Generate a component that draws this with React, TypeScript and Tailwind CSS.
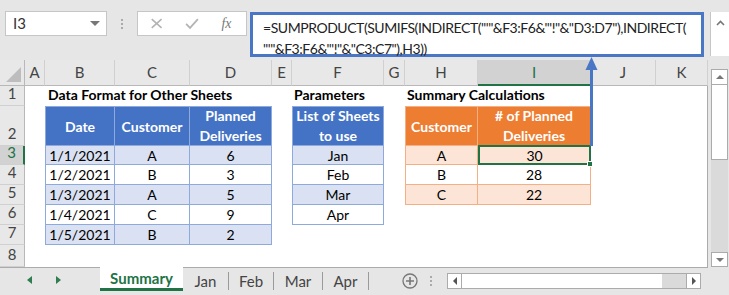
import React from "react";

const BLUE = "bg-[#4472c4]";

function Cell({ cls = "", children }: { cls?: string; children?: React.ReactNode }) {
  return <div className={"flex items-center justify-center whitespace-nowrap " + cls}>{children}</div>;
}

function ColHead({ label, sel = false }: { label: string; sel?: boolean }) {
  return (
    <div
      className={
        "flex items-center justify-center text-[15px] border-r border-[#d0d0d0] " +
        (sel
          ? "bg-[#d2d2d2] text-[#217346] border-b-2 border-b-[#217346]"
          : "bg-[#e8e8e8] text-[#444] border-b border-b-[#b8b8b8]")
      }
    >
      {label}
    </div>
  );
}

function RowHead({ n, sel = false }: { n: number; sel?: boolean }) {
  return (
    <div
      className={
        "flex items-end justify-center pb-[1px] text-[15px] border-b border-[#d0d0d0] " +
        (sel
          ? "bg-[#d2d2d2] text-[#217346] border-r-2 border-r-[#217346]"
          : "bg-[#e8e8e8] text-[#444] border-r border-r-[#b8b8b8]")
      }
    >
      {n}
    </div>
  );
}

export default function App() {
  const data = [
    ["1/1/2021", "A", "6"],
    ["1/2/2021", "B", "3"],
    ["1/3/2021", "A", "5"],
    ["1/4/2021", "C", "9"],
    ["1/5/2021", "B", "2"],
  ];
  const params = ["Jan", "Feb", "Mar", "Apr"];
  const summ = [
    ["A", "30"],
    ["B", "28"],
    ["C", "22"],
  ];

  return (
    <div className="relative w-[729px] h-[295px] overflow-hidden bg-[#e6e6e6] font-['Lato',sans-serif] text-black">
      {/* Formula bar */}
      <div className="flex h-[60px] items-start pt-[11px] pl-[5px] bg-[#e6e6e6]">
        <div className="flex h-[25px] w-[102px] items-center justify-between border border-[#c6c6c6] bg-white pl-[7px] pr-[6px]">
          <span className="text-[15px] text-[#333]">I3</span>
          <span className="h-0 w-0 border-x-[5px] border-t-[5px] border-x-transparent border-t-[#777]" />
        </div>
        <div className="flex h-[25px] w-[30px] flex-col items-center justify-center gap-[2px]">
          <span className="h-[2px] w-[2px] bg-[#aaa]" />
          <span className="h-[2px] w-[2px] bg-[#aaa]" />
          <span className="h-[2px] w-[2px] bg-[#aaa]" />
        </div>
        <div className="flex h-[25px] w-[110px] items-center border border-[#c6c6c6] bg-white">
          <svg width="110" height="23" viewBox="0 0 110 23">
            <path d="M14 7 L24 16 M24 7 L14 16" stroke="#b4b4b4" strokeWidth="1.6" fill="none" />
            <path d="M49 12 L53 16 L61 7" stroke="#b4b4b4" strokeWidth="1.8" fill="none" />
            <text x="85" y="16" fontSize="14" fontStyle="italic" fontFamily="'Liberation Serif',serif" fill="#777">
              fx
            </text>
          </svg>
        </div>
        <div className="ml-[3px] mt-[1px] h-[45px] w-[454px] border-[3px] border-[#4a76c6] bg-white pl-[10px] pt-[2px] text-[14px] leading-[21px] tracking-[-0.45px] text-[#222]">
          <div className="whitespace-nowrap">=SUMPRODUCT(SUMIFS(INDIRECT("'"&amp;F3:F6&amp;"'!"&amp;"D3:D7"),INDIRECT(</div>
          <div className="whitespace-nowrap">"'"&amp;F3:F6&amp;"'!"&amp;"C3:C7"),H3))</div>
        </div>
        <div className="ml-[6px] mt-[1px] flex h-[44px] w-[19px] justify-center border-l border-[#c6c6c6] bg-white pt-[8px]">
          <svg width="9" height="6" viewBox="0 0 9 6">
            <path d="M1 5 L4.5 1.5 L8 5" stroke="#777" strokeWidth="1.6" fill="none" />
          </svg>
        </div>
      </div>

      {/* Sheet area */}
      <div className="flex h-[207px]">
        <div className="grid w-[708px] grid-cols-[25px_20px_70px_75px_82px_20px_92px_21px_73px_113px_65px_52px] grid-rows-[26px_20px_40px_19px_20px_20px_20px_20px_22px] border-r border-[#ababab] bg-white text-[14px]">
          {/* header row */}
          <div className="relative border-b border-r border-[#b8b8b8] bg-[#e8e8e8]">
            <span className="absolute bottom-[3px] right-[3px] h-0 w-0 border-b-[15px] border-l-[15px] border-b-[#bdbdbd] border-l-transparent" />
          </div>
          {["A", "B", "C", "D", "E", "F", "G", "H"].map((c) => (
            <ColHead key={c} label={c} />
          ))}
          <ColHead label="I" sel />
          <ColHead label="J" />
          <ColHead label="K" />

          {/* row 1 */}
          <RowHead n={1} />
          <div />
          <div className="flex items-end pb-[1px] pl-[3px] font-bold whitespace-nowrap overflow-visible">Data Format for Other Sheets</div>
          <div />
          <div />
          <div />
          <div className="flex items-end pb-[1px] pl-[2px] font-bold whitespace-nowrap">Parameters</div>
          <div />
          <div className="flex items-end pb-[1px] pl-[2px] font-bold whitespace-nowrap">Summary Calculations</div>
          <div />
          <div />
          <div />

          {/* row 2 */}
          <RowHead n={2} />
          <div />
          <Cell cls={BLUE + " border border-[#8ea9db] text-white font-bold"}>Date</Cell>
          <Cell cls={BLUE + " border-y border-r border-[#8ea9db] text-white font-bold"}>Customer</Cell>
          <Cell cls={BLUE + " flex-col leading-[20px] border-y border-r border-[#8ea9db] text-white font-bold"}>
            <span>Planned</span>
            <span>Deliveries</span>
          </Cell>
          <div />
          <Cell cls={BLUE + " flex-col leading-[20px] border border-[#8ea9db] text-white font-bold"}>
            <span>List of Sheets</span>
            <span>to use</span>
          </Cell>
          <div />
          <Cell cls="bg-[#ed7d31] border border-[#f4b084] text-white font-bold">Customer</Cell>
          <Cell cls="bg-[#ed7d31] flex-col leading-[20px] border-y border-r border-[#f4b084] text-white font-bold">
            <span># of Planned</span>
            <span>Deliveries</span>
          </Cell>
          <div />
          <div />

          {/* rows 3-7 */}
          {data.map((r, i) => {
            const band = i % 2 === 0;
            const rowBg = band ? "bg-[#d9e1f2]" : "bg-white";
            const p = params[i];
            const s = summ[i];
            const orBg = i % 2 === 0 ? "bg-[#fce4d6]" : "bg-white";
            return (
              <React.Fragment key={i}>
                <RowHead n={i + 3} sel={i === 0} />
                <div />
                <Cell cls={rowBg + " border-x border-b border-[#8ea9db]"}>{r[0]}</Cell>
                <Cell cls={rowBg + " border-r border-b border-[#8ea9db]"}>{r[1]}</Cell>
                <Cell cls={rowBg + " border-r border-b border-[#8ea9db]"}>{r[2]}</Cell>
                <div />
                {p ? <Cell cls={rowBg + " border-x border-b border-[#8ea9db]"}>{p}</Cell> : <div />}
                <div />
                {s ? <Cell cls={orBg + " border-x border-b border-[#f4b084]"}>{s[0]}</Cell> : <div />}
                {s ? (
                  i === 0 ? (
                    <div className="relative -mt-[1px] flex items-center justify-center border-2 border-[#217346] bg-[#fce4d6]">
                      {s[1]}
                      <span className="absolute -bottom-[4px] -right-[4px] h-[6px] w-[6px] border border-white bg-[#217346]" />
                    </div>
                  ) : (
                    <Cell cls={orBg + " border-r border-b border-[#f4b084]"}>{s[1]}</Cell>
                  )
                ) : (
                  <div />
                )}
                <div />
                <div />
              </React.Fragment>
            );
          })}

          {/* row 8 */}
          <RowHead n={8} />
          <div />
          <div />
          <div />
          <div />
          <div />
          <div />
          <div />
          <div />
          <div />
          <div />
          <div />
        </div>

        {/* vertical scrollbar */}
        <div className="flex w-[21px] flex-col items-center pt-[9px] pl-[2px]">
          <div className="flex h-[16px] w-[17px] items-center justify-center border border-[#ababab] bg-white">
            <span className="h-0 w-0 border-x-[4px] border-b-[4px] border-x-transparent border-b-[#777]" />
          </div>
          <div className="h-[75px] w-[17px] border-x border-b border-[#ababab] bg-white" />
          <div className="flex-1 w-[17px] bg-[#dadada]" />
          <div className="flex h-[15px] w-[17px] items-center justify-center border border-[#ababab] bg-white">
            <span className="h-0 w-0 border-x-[4px] border-t-[4px] border-x-transparent border-t-[#777]" />
          </div>
        </div>
      </div>

      {/* Tabs bar */}
      <div className="flex h-[28px] w-[708px] items-start border-t border-[#ababab] bg-[#e6e6e6]">
        <div className="flex h-[24px] w-[100px] items-center">
          <span className="ml-[27px] h-0 w-0 border-y-[4px] border-r-[5px] border-y-transparent border-r-[#2e7d4f]" />
          <span className="ml-[24px] h-0 w-0 border-y-[4px] border-l-[5px] border-y-transparent border-l-[#2e7d4f]" />
        </div>
        <div className="-mt-[1px] flex h-[24px] w-[83px] items-center justify-center border-b-[3px] border-[#217346] bg-white pt-[2px] text-[15px] font-bold text-[#217346]">
          Summary
        </div>
        <div className="mt-[4px] flex h-[18px] items-center text-[15px] text-[#444]">
          <span className="w-[45px] text-center">Jan</span>
          <span className="h-[18px] w-px bg-[#9a9a9a]" />
          <span className="w-[44px] text-center">Feb</span>
          <span className="h-[18px] w-px bg-[#9a9a9a]" />
          <span className="w-[48px] text-center">Mar</span>
          <span className="h-[18px] w-px bg-[#9a9a9a]" />
          <span className="w-[45px] text-center">Apr</span>
          <span className="h-[18px] w-px bg-[#9a9a9a]" />
        </div>
        <div className="mt-[5px] ml-[33px] flex h-[16px] w-[16px] items-center justify-center">
          <svg width="16" height="16" viewBox="0 0 16 16">
            <circle cx="8" cy="8" r="7" stroke="#777" strokeWidth="1.3" fill="none" />
            <path d="M8 4 V12 M4 8 H12" stroke="#777" strokeWidth="1.6" />
          </svg>
        </div>
        <div className="mt-[8px] ml-[12px] flex flex-col gap-[2px]">
          <span className="h-[2px] w-[2px] bg-[#aaa]" />
          <span className="h-[2px] w-[2px] bg-[#aaa]" />
          <span className="h-[2px] w-[2px] bg-[#aaa]" />
        </div>
        <div className="mt-[5px] ml-[15px] flex h-[16px] w-[254px] border border-[#ababab] bg-white">
          <div className="flex w-[14px] items-center justify-center border-r border-[#ababab]">
            <span className="h-0 w-0 border-y-[4px] border-r-[4px] border-y-transparent border-r-[#555]" />
          </div>
          <div className="flex-1" />
          <div className="w-[24px] bg-[#dadada]" />
          <div className="flex w-[14px] items-center justify-center border-l border-[#ababab]">
            <span className="h-0 w-0 border-y-[4px] border-l-[4px] border-y-transparent border-l-[#555]" />
          </div>
        </div>
      </div>

      {/* annotation arrow */}
      <svg className="absolute left-[584px] top-[56px]" width="15" height="92" viewBox="0 0 15 92">
        <path d="M7.5 12 V90" stroke="#4a76c6" strokeWidth="3" />
        <path d="M1.5 14 L7.5 1 L13.5 14 Z" fill="#4a76c6" />
      </svg>
    </div>
  );
}
